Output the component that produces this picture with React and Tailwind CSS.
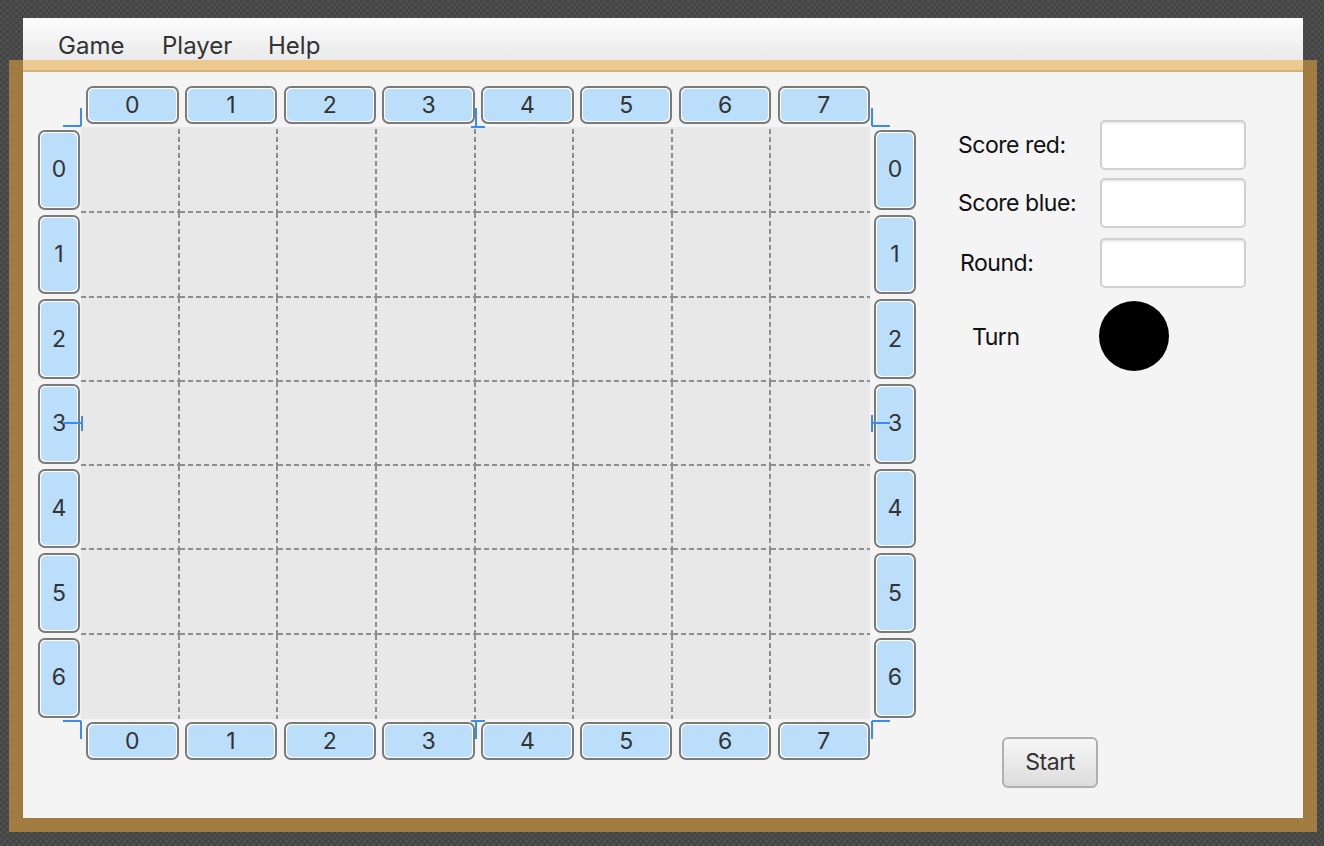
const COLS = [0, 1, 2, 3, 4, 5, 6, 7];
const ROWS = [0, 1, 2, 3, 4, 5, 6];

function Tab({ children, className = '' }) {
  return (
    <div className={`rounded-[7px] border-2 border-[#7a7a7a] bg-white p-px ${className}`}>
      <div className="flex h-full w-full items-center justify-center rounded-[5px] bg-[#bbdefb] text-[23px] leading-none text-[#333]">
        {children}
      </div>
    </div>
  );
}

function TabRow() {
  return (
    <div className="flex h-[38px] gap-[6.3px] pl-[48px]">
      {COLS.map((c) => (
        <Tab key={c} className="h-[38px] w-[92.5px]">{c}</Tab>
      ))}
    </div>
  );
}

function TabColumn() {
  return (
    <div className="flex w-[42px] flex-col gap-[5px] pt-[3px]">
      {ROWS.map((r) => (
        <Tab key={r} className="h-[79.7px] w-[42px]">{r}</Tab>
      ))}
    </div>
  );
}

function Markers() {
  const blue = '#3b8cf0';
  const lines = [
    // top-left
    [25, 40, 43, 40], [43, 22, 43, 40],
    // top-mid
    [433, 41, 447, 41], [438, 22, 438, 41],
    // top-right
    [834, 22, 834, 40], [834, 40, 852, 40],
    // left-mid
    [25, 337, 44, 337], [44, 330, 44, 345],
    // right-mid
    [834, 329, 834, 346], [834, 337, 852, 337],
    // bottom-left
    [25, 635, 43, 635], [43, 635, 43, 653],
    // bottom-mid
    [433, 635, 447, 635], [438, 635, 438, 653],
    // bottom-right
    [834, 635, 852, 635], [834, 635, 834, 653],
  ];
  return (
    <svg className="pointer-events-none absolute left-0 top-0" width="880" height="680">
      {lines.map(([x1, y1, x2, y2], i) => (
        <line key={i} x1={x1} y1={y1} x2={x2} y2={y2} stroke={blue} strokeWidth="2" />
      ))}
    </svg>
  );
}

// dashed grid lines drawn on the right / bottom edge of each cell
const DASH_BOTH =
  '[background-image:linear-gradient(#8e8e8e_5px,transparent_5px),linear-gradient(to_right,#8e8e8e_5px,transparent_5px)] [background-size:2px_8px,8px_2px] [background-position:right_top,left_bottom] [background-repeat:repeat-y,repeat-x]';
const DASH_RIGHT =
  '[background-image:linear-gradient(#8e8e8e_5px,transparent_5px)] [background-size:2px_8px] [background-position:right_top] [background-repeat:repeat-y]';
const DASH_BOTTOM =
  '[background-image:linear-gradient(to_right,#8e8e8e_5px,transparent_5px)] [background-size:8px_2px] [background-position:left_bottom] [background-repeat:repeat-x]';

function cellClass(r, c) {
  if (c < 7 && r < 6) return DASH_BOTH;
  if (c < 7) return DASH_RIGHT;
  if (r < 6) return DASH_BOTTOM;
  return '';
}

function Board() {
  return (
    <div className="relative ml-[15px] mt-[14px] flex flex-col">
      <TabRow />
      <div className="mt-[3px] flex">
        <TabColumn />
        <div className="ml-px grid h-[592px] w-[789px] grid-cols-8 grid-rows-7 bg-[#e8e8e8] pt-[2px]">
          {ROWS.map((r) =>
            COLS.map((c) => <div key={`${r}-${c}`} className={cellClass(r, c)} />)
          )}
        </div>
        <div className="ml-[4px]">
          <TabColumn />
        </div>
      </div>
      <div className="mt-[3px]">
        <TabRow />
      </div>
      <Markers />
    </div>
  );
}

function Field() {
  return (
    <div className="h-[50px] w-[146px] rounded-[5px] border-2 border-[#d0d0d0] bg-white shadow-[inset_0_3px_3px_-2px_rgba(0,0,0,0.12)]" />
  );
}

function SidePanel() {
  return (
    <div className="ml-[42px] flex flex-col pb-[30px] pt-[48px] text-[23px] tracking-[-0.02em] text-[#111]">
      <div className="flex items-center">
        <span className="w-[142px]">Score red:</span>
        <Field />
      </div>
      <div className="mt-[8px] flex items-center">
        <span className="w-[142px]">Score blue:</span>
        <Field />
      </div>
      <div className="mt-[10px] flex items-center">
        <span className="w-[142px] pl-[2px]">Round:</span>
        <Field />
      </div>
      <div className="mt-[13px] flex items-center">
        <span className="w-[141px] pl-[14px] pt-[3px]">Turn</span>
        <div className="h-[70px] w-[70px] rounded-full bg-black" />
      </div>
      <button className="ml-[44px] mt-auto h-[51px] w-[96px] rounded-[6px] border-2 border-[#b0b0b0] bg-gradient-to-b from-[#f7f7f7] to-[#dcdcdc] text-[23px] text-[#333]">
        Start
      </button>
    </div>
  );
}

export default function App() {
  return (
    <div className="h-[846px] w-[1324px] overflow-hidden bg-[#474747] bg-[image:repeating-conic-gradient(#4f4f4f_0_25%,#444444_0_50%)] bg-size-[6px_6px] pt-[18px] font-['Inter',sans-serif]">
      <div className="ml-[23px] flex h-[42px] w-[1280px] items-start bg-gradient-to-b from-[#fcfcfc] to-[#eaeaea] pl-[35px] pt-[16px] text-[24px] leading-none text-[#333]">
        <span className="w-[104px]">Game</span>
        <span className="w-[106px]">Player</span>
        <span>Help</span>
      </div>
      <div className="ml-[9px] flex h-[772px] w-[1308px] flex-col bg-[#a07c40] px-[14px] pb-[14px]">
        <div className="h-[12px] border-b-2 border-[#d3b178] bg-[#ebc98f]" />
        <div className="flex flex-1 bg-[#f4f4f4]">
          <Board />
          <SidePanel />
        </div>
      </div>
    </div>
  );
}
